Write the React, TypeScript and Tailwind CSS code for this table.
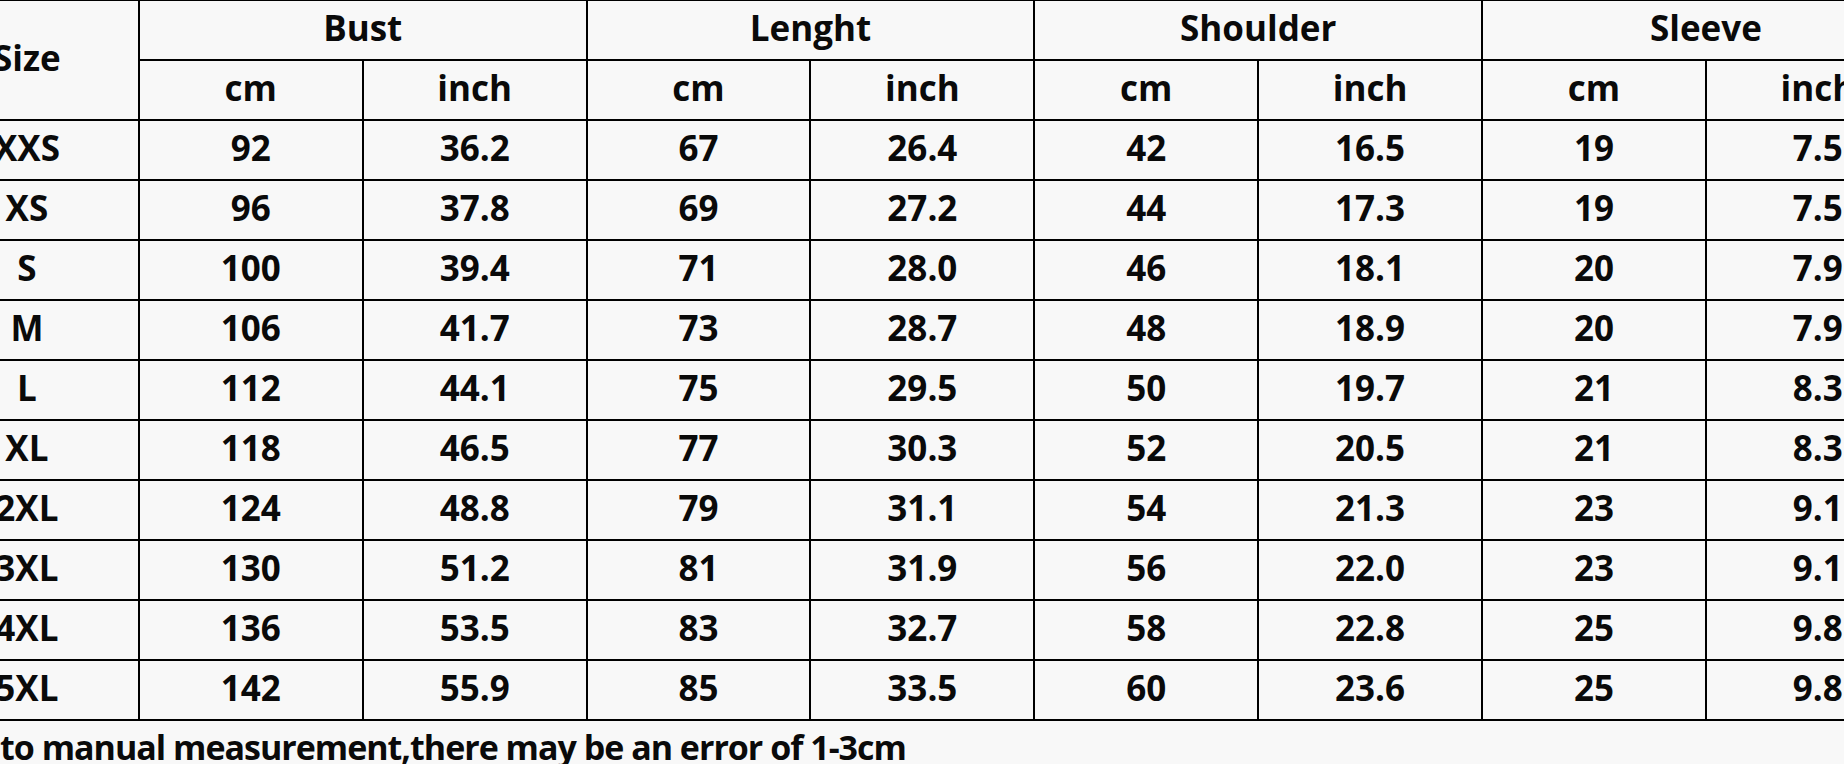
import React from "react";

const rows: string[][] = [
  ["XXS", "92", "36.2", "67", "26.4", "42", "16.5", "19", "7.5"],
  ["XS", "96", "37.8", "69", "27.2", "44", "17.3", "19", "7.5"],
  ["S", "100", "39.4", "71", "28.0", "46", "18.1", "20", "7.9"],
  ["M", "106", "41.7", "73", "28.7", "48", "18.9", "20", "7.9"],
  ["L", "112", "44.1", "75", "29.5", "50", "19.7", "21", "8.3"],
  ["XL", "118", "46.5", "77", "30.3", "52", "20.5", "21", "8.3"],
  ["2XL", "124", "48.8", "79", "31.1", "54", "21.3", "23", "9.1"],
  ["3XL", "130", "51.2", "81", "31.9", "56", "22.0", "23", "9.1"],
  ["4XL", "136", "53.5", "83", "32.7", "58", "22.8", "25", "9.8"],
  ["5XL", "142", "55.9", "85", "33.5", "60", "23.6", "25", "9.8"],
];

const groups = ["Bust", "Lenght", "Shoulder", "Sleeve"];

const cell =
  "border-2 border-black text-center align-middle p-0 pb-[6px] h-[60px] leading-none";

export default function App() {
  return (
    <div
      className="w-[1844px] h-[764px] overflow-hidden bg-[#f8f8f8] text-[#0a0a0a] font-bold"
      style={{ fontFamily: '"Open Sans", "Noto Sans", sans-serif' }}
    >
      <table className="table-fixed border-collapse w-[2015px] -ml-[86px] -mt-[1px] text-[35px]">
        <colgroup>
          {Array.from({ length: 9 }).map((_, i) => (
            <col key={i} className="w-[223.86px]" />
          ))}
        </colgroup>
        <thead>
          <tr>
            <th rowSpan={2} className={cell + " font-bold"}>
              Size
            </th>
            {groups.map((g) => (
              <th key={g} colSpan={2} className={cell + " font-bold"}>
                {g}
              </th>
            ))}
          </tr>
          <tr>
            {groups.map((g) => (
              <React.Fragment key={g}>
                <th className={cell + " font-bold"}>cm</th>
                <th className={cell + " font-bold"}>inch</th>
              </React.Fragment>
            ))}
          </tr>
        </thead>
        <tbody>
          {rows.map((r) => (
            <tr key={r[0]}>
              {r.map((v, i) => (
                <td key={i} className={cell}>
                  {v}
                </td>
              ))}
            </tr>
          ))}
        </tbody>
      </table>
      <div className="text-[34px] leading-[44px] pt-[4px] tracking-[-1px] whitespace-nowrap">
        to manual measurement,there may be an error of 1-3cm
      </div>
    </div>
  );
}
